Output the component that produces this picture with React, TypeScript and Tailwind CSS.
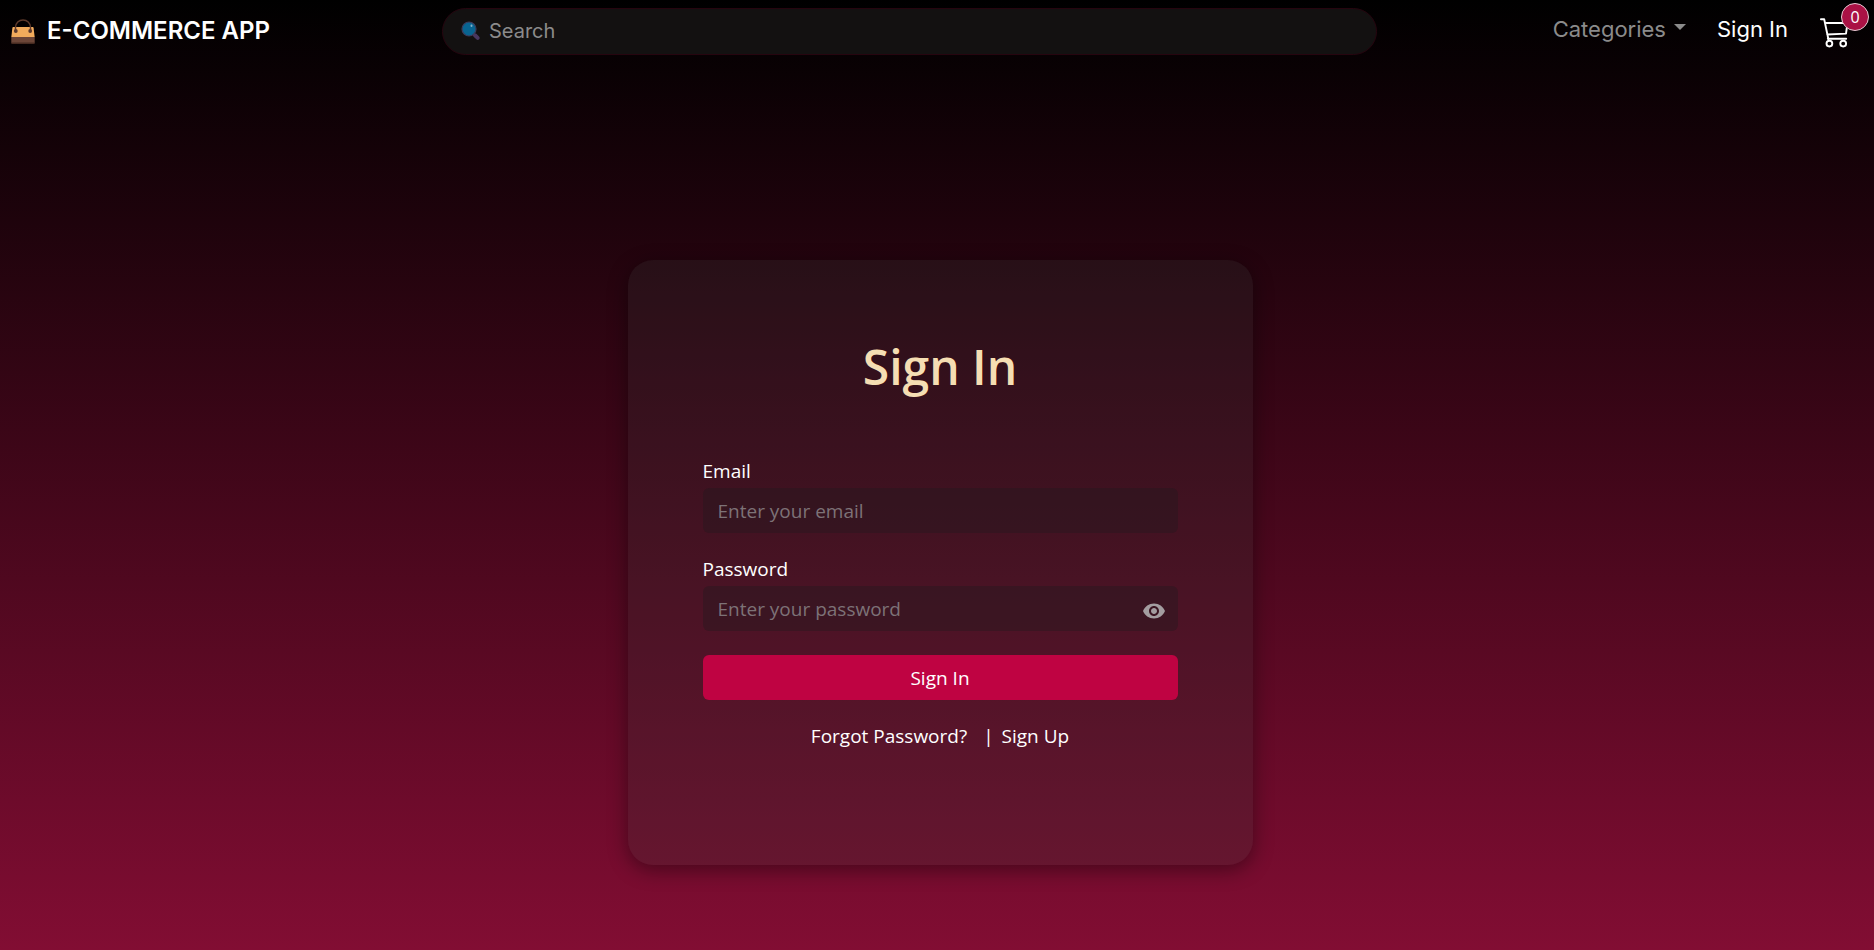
import { useState } from "react";
import { MdVisibility, MdVisibilityOff } from "react-icons/md";

function BagIcon() {
  return (
    <svg viewBox="0 0 24 25" className="h-[25px] w-6 shrink-0" aria-hidden="true">
      <path d="M2.500 8h19c.7 0 1 .4 1.100 1l1.100 9H.3l1.100-9c.1-.6.400-1 1.100-1z" fill="#f2ab5c" />
      <path d="M.3 18h23.400v5.500c0 .8-.5 1.500-1.500 1.500H1.800C.8 25 .3 24.300.3 23.500z" fill="#6d4638" />
      <path d="M.3 23.500h23.400c0 .9-.5 1.500-1.500 1.500H1.800C.8 25 .3 24.400.3 23.500z" fill="#472a20" />
      <path d="M4.500 12V8.500C4.500 4 8 1 12 1s7.500 3 7.500 7.500V12" fill="none" stroke="#5f3a2c" strokeWidth="1.500" />
      <circle cx="4.800" cy="12" r="1.900" fill="#5a392e" />
      <circle cx="19.200" cy="12" r="1.900" fill="#5a392e" />
    </svg>
  );
}

function SearchIcon() {
  return (
    <svg viewBox="0 0 20 20" className="size-5 shrink-0" aria-hidden="true">
      <path d="M11.500 12l5 5" stroke="#40315a" strokeWidth="2.500" strokeLinecap="round" />
      <path d="M14 14.300l2.700 2.600" stroke="#483760" strokeWidth="4" strokeLinecap="round" />
      <circle cx="8" cy="8" r="7" fill="#086491" stroke="#3b3c5c" strokeWidth="1.200" />
      <ellipse cx="10.500" cy="4.800" rx="1" ry="1.300" fill="#7fb0c8" />
    </svg>
  );
}

function CartIcon() {
  return (
    <svg viewBox="0 0 30 30" className="size-[30px]" fill="none" stroke="#fff" strokeWidth="1.900" strokeLinecap="round" strokeLinejoin="round" aria-hidden="true">
      <path d="M.9 1.200h3.300l4.200 20M5 5h22.500l-1.500 10.600-18.800.9M7.800 20.800h18.400" />
      <circle cx="9.400" cy="25.600" r="2.900" />
      <circle cx="23.200" cy="25.600" r="2.900" />
    </svg>
  );
}

function Navbar() {
  return (
    <header className="flex h-[62px] items-center justify-between pl-[11px] pr-6 font-[Inter,sans-serif]">
      <a href="#home" className="flex w-[431px] items-center gap-3 text-2xl font-semibold leading-8 text-white">
        <BagIcon />
        E-COMMERCE APP
      </a>
      <form role="search" className="flex h-[47px] flex-1 items-center gap-2 rounded-full border border-[#26050f] bg-[#131111] pl-[18px] pr-5">
        <SearchIcon />
        <input
          type="search"
          aria-label="Search"
          placeholder="Search"
          className="min-w-0 flex-1 bg-transparent text-xl leading-7 text-white outline-none placeholder:text-[#8b8b8b]"
        />
      </form>
      <nav className="ml-44 flex items-center pb-1 text-[22px] leading-8">
        <button type="button" className="flex items-center gap-2 text-[#8b8b8b]">
          Categories
          <svg viewBox="0 0 12 6" className="mb-1 h-[6px] w-3" fill="currentColor" aria-hidden="true">
            <path d="M0 0h12L6 6z" />
          </svg>
        </button>
        <a href="#signin" className="ml-[31px] text-white">Sign In</a>
        <a href="#cart" aria-label="Cart" className="relative ml-8 mt-2">
          <CartIcon />
          <span className="absolute -right-[19px] -top-[15px] flex size-[28px] items-center justify-center rounded-full border border-[#e6ccd4] bg-[#aa1245] font-['Open_Sans',sans-serif] text-base leading-none text-white">
            0
          </span>
        </a>
      </nav>
    </header>
  );
}

const fieldClass =
  "block h-[45px] w-full rounded-md bg-[#221a1e]/40 px-[15px] text-[19px] leading-7 text-white outline-none placeholder:text-[#7d7277]";

function SignInCard() {
  const [visible, setVisible] = useState(false);
  return (
    <form className="w-[625px] rounded-[25px] bg-[#333333]/25 px-[75px] pb-[114px] pt-[77px] font-['Open_Sans',sans-serif] text-[19px] leading-[30px] text-white shadow-[0_5px_20px_rgba(0,0,0,0.4)]">
      <h1 className="text-center text-5xl font-semibold leading-[60px] text-[#f5deb3]">Sign In</h1>
      <div className="mt-[59px]">
        <label htmlFor="email" className="mb-[2px] block">Email</label>
        <input id="email" type="email" placeholder="Enter your email" className={fieldClass} />
      </div>
      <div className="mt-[21px]">
        <label htmlFor="password" className="mb-[2px] block">Password</label>
        <div className="relative">
          <input id="password" type={visible ? "text" : "password"} placeholder="Enter your password" className={fieldClass} />
          <button
            type="button"
            aria-label="Toggle password visibility"
            onClick={() => setVisible(!visible)}
            className="absolute right-3 top-[13px] text-2xl text-[#a39da0]"
          >
            {visible ? <MdVisibilityOff /> : <MdVisibility />}
          </button>
        </div>
      </div>
      <button type="submit" className="mt-6 block h-[45px] w-full rounded-md bg-[#bf0342]">Sign In</button>
      <div className="mt-[21px] flex justify-center">
        <a href="#forgot">Forgot Password?</a>
        <span className="ml-4 mr-2">|</span>
        <a href="#signup">Sign Up</a>
      </div>
    </form>
  );
}

export default function App() {
  return (
    <div className="flex min-h-screen flex-col bg-[linear-gradient(180deg,#000000,#820d33)]">
      <Navbar />
      <main className="flex flex-1 items-start justify-center pb-[85px] pl-[22px] pr-4 pt-[198px]">
        <SignInCard />
      </main>
    </div>
  );
}
